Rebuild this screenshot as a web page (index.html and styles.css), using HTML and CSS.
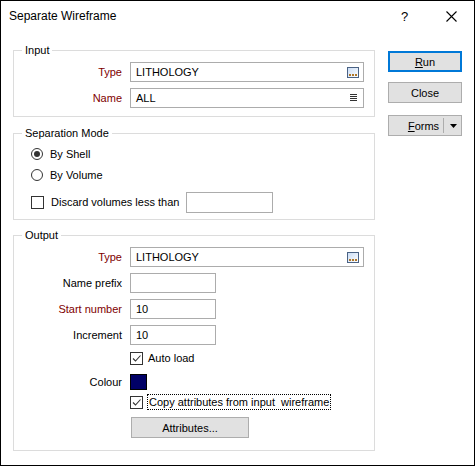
FILE: index.html
```html
<!DOCTYPE html>
<html>
<head>
<meta charset="utf-8">
<link rel="stylesheet" href="styles.css">
</head>
<body>
<div class="window">
  <div class="titlebar">
    <span class="title">Separate Wireframe</span>
    <span class="help">?</span>
    <span class="close-x"><svg width="11" height="11" viewBox="0 0 11 11"><path d="M0.5 0.5 L10.5 10.5 M10.5 0.5 L0.5 10.5" stroke="#000" stroke-width="1.1" fill="none"/></svg></span>
  </div>
  <div class="body">
    <div class="main">
      <div class="group group-input">
        <div class="legend">Input</div>
        <div class="form-grid">
          <label class="lbl req">Type</label>
          <div class="field wide"><span>LITHOLOGY</span>
            <svg class="browse" width="12" height="11" viewBox="0 0 12 11"><defs><linearGradient id="g1" x1="0" y1="0" x2="1" y2="1"><stop offset="0" stop-color="#c9dcf5"/><stop offset="1" stop-color="#ffffff"/></linearGradient></defs><rect x="0.5" y="0.5" width="11" height="10" fill="url(#g1)" stroke="#4a6284"/><rect x="2" y="7" width="2" height="2" fill="#b0782a"/><rect x="5" y="7" width="2" height="2" fill="#b0782a"/><rect x="8" y="7" width="2" height="2" fill="#b0782a"/></svg>
          </div>
          <label class="lbl req">Name</label>
          <div class="field wide"><span>ALL</span>
            <svg class="list" width="7" height="8" viewBox="0 0 7 8"><path d="M0 0.5H7M0 2.5H7M0 4.5H7M0 6.5H7" stroke="#333" stroke-width="1"/></svg>
          </div>
        </div>
      </div>

      <div class="group group-sep">
        <div class="legend">Separation Mode</div>
        <div class="opt-row first">
          <span class="radio checked"></span><span>By Shell</span>
        </div>
        <div class="opt-row">
          <span class="radio"></span><span>By Volume</span>
        </div>
        <div class="opt-row discard">
          <span class="check"></span><span class="discard-label">Discard volumes less than</span>
          <div class="field small"></div>
        </div>
      </div>

      <div class="group group-out">
        <div class="legend">Output</div>
        <div class="form-grid">
          <label class="lbl req">Type</label>
          <div class="field wide"><span>LITHOLOGY</span>
            <svg class="browse" width="12" height="11" viewBox="0 0 12 11"><defs><linearGradient id="g2" x1="0" y1="0" x2="1" y2="1"><stop offset="0" stop-color="#c9dcf5"/><stop offset="1" stop-color="#ffffff"/></linearGradient></defs><rect x="0.5" y="0.5" width="11" height="10" fill="url(#g2)" stroke="#4a6284"/><rect x="2" y="7" width="2" height="2" fill="#b0782a"/><rect x="5" y="7" width="2" height="2" fill="#b0782a"/><rect x="8" y="7" width="2" height="2" fill="#b0782a"/></svg>
          </div>
          <label class="lbl">Name prefix</label>
          <div class="field small"></div>
          <label class="lbl req">Start number</label>
          <div class="field small"><span>10</span></div>
          <label class="lbl">Increment</label>
          <div class="field small"><span>10</span></div>
        </div>
        <div class="extra-grid">
          <span></span>
          <div class="chk-row row-auto"><span class="check on"><svg width="11" height="11" viewBox="0 0 11 11"><path d="M2 5.5 L4.5 8 L9.5 2.5" stroke="#333" stroke-width="1.1" fill="none"/></svg></span><span>Auto load</span></div>
          <label class="lbl row-colour">Colour</label>
          <div class="row-colour"><span class="swatch"></span></div>
          <span></span>
          <div class="chk-row row-copy"><span class="check on"><svg width="11" height="11" viewBox="0 0 11 11"><path d="M2 5.5 L4.5 8 L9.5 2.5" stroke="#333" stroke-width="1.1" fill="none"/></svg></span><span class="focus">Copy attributes from input  wireframe</span></div>
          <span></span>
          <div class="row-btn"><button class="btn attr">Attributes...</button></div>
        </div>
      </div>
    </div>

    <div class="side">
      <button class="btn run"><u>R</u>un</button>
      <button class="btn close">Close</button>
      <button class="btn forms"><span class="forms-text"><u>F</u>orms</span><span class="sep"></span><svg class="arrow" width="7" height="4" viewBox="0 0 7 4"><path d="M0 0H7L3.5 4Z" fill="#000"/></svg></button>
    </div>
  </div>
</div>
</body>
</html>
```

FILE: styles.css
```css
* { box-sizing: border-box; }
html, body { margin: 0; padding: 0; background: #fff; }
body {
  font-family: "Liberation Sans", Arial, sans-serif;
  font-size: 11px;
  color: #000;
}
.window {
  width: 475px;
  height: 466px;
  border: 1px solid #000;
  background: #fff;
  overflow: hidden;
}
.titlebar {
  height: 30px;
  display: flex;
  align-items: center;
  font-size: 12px;
}
.title { padding-left: 8px; flex: 1; }
.help { width: 12px; margin-right: 33px; font-size: 13px; }
.close-x { width: 11px; height: 11px; margin-right: 17px; display: flex; }
.close-x svg { display: block; }

.body { display: flex; align-items: flex-start; }
.main { margin-left: 12px; width: 362px; }

.group {
  border: 1px solid #dcdcdc;
  padding: 0 10px 8px 0;
}
.legend {
  width: fit-content;
  height: 13px;
  line-height: 13px;
  margin: -7px 0 0 8px;
  padding: 0 3px;
  background: #fff;
}
.group-input { margin-top: 19px; }
.group-sep { margin-top: 16px; padding: 0 0 7px 0; }
.group-out { margin-top: 15px; padding-bottom: 12px; }

.form-grid {
  display: grid;
  grid-template-columns: 108px 1fr;
  column-gap: 8px;
  row-gap: 6px;
  margin-top: 5px;
  align-items: center;
}
.lbl { text-align: right; white-space: nowrap; }
.req { color: #800000; }

.field {
  height: 20px;
  border: 1px solid #acacac;
  background: #fff;
  display: flex;
  align-items: center;
  padding-left: 5px;
  padding-right: 4px;
}
.field span { flex: 1; }
.field.wide { width: 234px; }
.field.small { width: 86px; }
.list { margin-right: 2px; }

.opt-row {
  display: flex;
  align-items: center;
  height: 21px;
  padding-left: 17px;
}
.opt-row.first { margin-top: 3px; }
.opt-row .radio, .opt-row .check { margin-right: 7px; }
.opt-row.discard { margin-top: 7px; height: 20px; }
.discard-label { width: 135px; }
.opt-row .field.small { width: 87px; height: 21px; }

.radio {
  width: 12px;
  height: 12px;
  border: 1px solid #333;
  border-radius: 50%;
  display: inline-flex;
  align-items: center;
  justify-content: center;
  background: #fff;
}
.radio.checked::after {
  content: "";
  width: 6px;
  height: 6px;
  border-radius: 50%;
  background: #333;
}
.check {
  width: 13px;
  height: 13px;
  border: 1px solid #333;
  background: #fff;
  display: inline-flex;
  align-items: center;
  justify-content: center;
}
.check svg { display: block; }

.extra-grid {
  display: grid;
  grid-template-columns: 108px 1fr;
  column-gap: 8px;
  align-items: center;
}
.chk-row { display: flex; align-items: center; }
.chk-row .check { margin-right: 5px; }
.row-auto { height: 20px; margin-top: 3px; }
.row-colour { height: 22px; margin-top: 3px; display: flex; align-items: center; justify-content: flex-end; }
div.row-colour { justify-content: flex-start; }
.swatch {
  width: 17px;
  height: 16px;
  background: #000066;
  border: 1px solid #000;
}
.row-copy { height: 18px; }
.focus {
  outline: 1px dotted #000;
  outline-offset: 0;
  white-space: pre;
  line-height: 14px;
  padding: 0 1px;
}
.row-btn { margin-top: 6px; }

.btn {
  font-family: inherit;
  font-size: 11px;
  color: #000;
  background: #e1e1e1;
  border: 1px solid #adadad;
  height: 21px;
  padding: 0;
  display: flex;
  align-items: center;
  justify-content: center;
}
.btn u { text-decoration: underline; }
.attr { width: 118px; margin-left: 1px; }

.side {
  margin-left: 13px;
  margin-top: 20px;
  display: flex;
  flex-direction: column;
}
.side .btn { width: 74px; }
.run { border: 2px solid #0078d7; }
.close { margin-top: 10px; }
.forms { margin-top: 12px; justify-content: flex-start; }
.forms-text { margin-left: 17px; width: 35px; text-align: center; }
.sep { width: 1px; height: 15px; background: #adadad; margin-left: 2px; }
.arrow { margin-left: 6px; }
```
